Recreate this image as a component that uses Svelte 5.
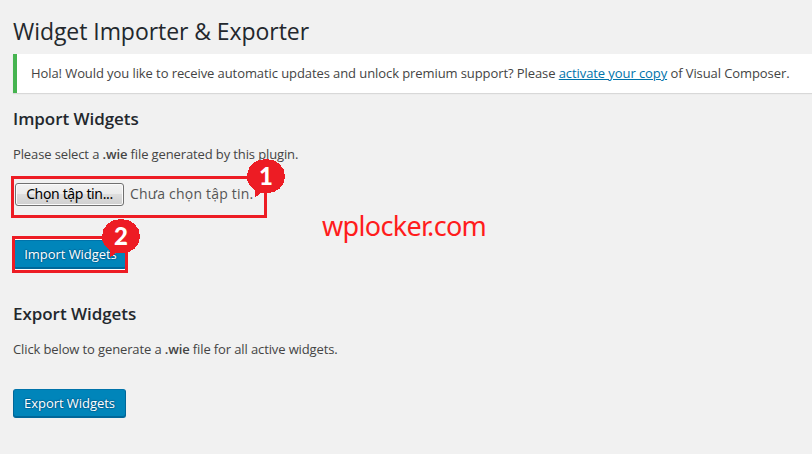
<script>
  const callouts = [
    { n: 1, cls: 'one' },
    { n: 2, cls: 'two' }
  ];
</script>

<main>
  <h1><span>Widget Importer &amp; Exporter</span></h1>
  <div class="notice">
    <p>Hola! Would you like to receive automatic updates and unlock premium support? Please <a href="#activate">activate your copy</a> of Visual Composer.</p>
  </div>

  <section class="import">
    <h2>Import Widgets</h2>
    <p>Please select a <b>.wie</b> file generated by this plugin.</p>
    <div class="file">
      <button class="choose" type="button">Chọn tập tin...</button>
      <span class="status">Chưa chọn tập tin.</span>
    </div>
    <button class="primary" type="button">Import Widgets</button>
  </section>

  <section class="export">
    <h2>Export Widgets</h2>
    <p>Click below to generate a <b>.wie</b> file for all active widgets.</p>
    <button class="primary" type="button">Export Widgets</button>
  </section>

  <div class="frame frame-file"></div>
  <div class="frame frame-import"></div>
  {#each callouts as c}
    <div class="callout {c.cls}">
      <svg width="40" height="42" viewBox="0 0 40 42" shape-rendering="crispEdges">
        <path d="M20 0C31 0 39 7.500 39 17.500S31 34 20 34.500C18 34.500 16.500 34.300 15 34L9 38.500V31C3.500 27.500 1 23 1 17.500C1 7.500 9 0 20 0Z" fill="#ed1c24" />
      </svg>
      <span>{c.n}</span>
    </div>
  {/each}
  <div class="watermark">wplocker.com</div>
</main>

<style>
  :global(body) { margin: 0; background: #f1f1f1; }
  main {
    position: relative;
    box-sizing: border-box;
    width: 812px;
    height: 454px;
    padding-left: 13px;
    overflow: hidden;
    background: #f1f1f1;
    color: #444;
    font: 13px/20px "Open Sans", sans-serif;
    letter-spacing: -.085px;
  }
  h1, h2, p { margin: 0; white-space: nowrap; }
  h1 {
    height: 54px;
    padding-top: 16px;
    box-sizing: border-box;
    color: #23282d;
    font-size: 23px;
    font-weight: 400;
    line-height: 30px;
    letter-spacing: -.06px;
  }
  .notice {
    box-sizing: border-box;
    height: 39px;
    padding: 9px 0 0 14px;
    border-left: 4px solid #46b450;
    background: #fff;
    box-shadow: 0 1px 1px rgba(0, 0, 0, .1);
  }
  a { color: #0073aa; text-decoration: underline; }
  b { font-weight: 600; }
  section { display: flex; flex-direction: column; align-items: flex-start; }
  .import { padding-top: 16px; }
  .export { padding-top: 35px; }
  h2 { color: #23282d; font-size: 17px; font-weight: 600; line-height: 20px; letter-spacing: -.05px; }
  section p { margin-top: 15px; letter-spacing: -.12px; }
  .file { display: flex; align-items: center; height: 24px; margin: 18px 0 34px 2px; }
  .choose {
    box-sizing: border-box;
    width: 109px;
    height: 23px;
    padding: 0;
    border: 1px solid #707070;
    border-radius: 3px;
    background: linear-gradient(#f2f2f2 0%, #ebebeb 49%, #ddd 50%, #cfcfcf 100%);
    box-shadow: inset 0 0 0 1px #fbfbfb;
    color: #000;
    font: 14px/20px "Noto Sans", sans-serif;
    letter-spacing: -.35px;
    white-space: nowrap;
  }
  .status { margin-left: 6px; font-size: 14px; color: #555; letter-spacing: .2px; white-space: nowrap; }
  .primary {
    box-sizing: border-box;
    width: 113px;
    height: 29px;
    padding: 0 0 1px;
    border: 1px solid #0073aa;
    border-color: #0073aa #006799 #006799;
    border-radius: 3px;
    background: #0085ba;
    box-shadow: inset 0 -1px 0 #006799;
    color: #fff;
    font: 13px/26px "Open Sans", sans-serif;
    letter-spacing: -.05px;
    text-shadow: 0 -1px 1px #006799, 1px 0 1px #006799, 0 1px 1px #006799, -1px 0 1px #006799;
    white-space: nowrap;
  }
  .import .primary { width: 114px; padding-left: 1px; }
  .export .primary { margin-top: 30px; }
  .frame { position: absolute; box-sizing: border-box; border: 3px solid #ed1c24; }
  .frame-file { left: 11px; top: 176px; width: 256px; height: 42px; }
  .frame-import { left: 12px; top: 236px; width: 116px; height: 37px; box-shadow: inset 0 1px 0 #fff, inset 0 -1px 0 #fff; }
  .callout { position: absolute; width: 40px; height: 42px; }
  .callout svg { display: block; }
  .callout span {
    position: absolute;
    left: 0;
    top: 2px;
    width: 40px;
    color: #fff;
    font: 900 24px/30px Lato, sans-serif;
    text-align: center;
  }
  .one { left: 246px; top: 159px; }
  .two { left: 101px; top: 219px; }
  .watermark {
    position: absolute;
    left: 322px;
    top: 208px;
    color: #ff1c1c;
    font: 27px/36px "Noto Sans", sans-serif;
    letter-spacing: -.68px;
    white-space: nowrap;
  }
</style>
